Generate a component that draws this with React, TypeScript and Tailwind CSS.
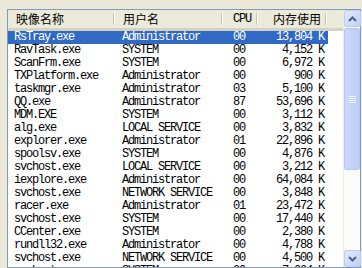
import React from 'react';

type Proc = { name: string; user: string; cpu: string; mem: string };

const procs: Proc[] = [
  { name: 'RsTray.exe', user: 'Administrator', cpu: '00', mem: '13,804 K' },
  { name: 'RavTask.exe', user: 'SYSTEM', cpu: '00', mem: '4,152 K' },
  { name: 'ScanFrm.exe', user: 'SYSTEM', cpu: '00', mem: '6,972 K' },
  { name: 'TXPlatform.exe', user: 'Administrator', cpu: '00', mem: '900 K' },
  { name: 'taskmgr.exe', user: 'Administrator', cpu: '03', mem: '5,100 K' },
  { name: 'QQ.exe', user: 'Administrator', cpu: '87', mem: '53,696 K' },
  { name: 'MDM.EXE', user: 'SYSTEM', cpu: '00', mem: '3,112 K' },
  { name: 'alg.exe', user: 'LOCAL SERVICE', cpu: '00', mem: '3,832 K' },
  { name: 'explorer.exe', user: 'Administrator', cpu: '01', mem: '22,896 K' },
  { name: 'spoolsv.exe', user: 'SYSTEM', cpu: '00', mem: '4,876 K' },
  { name: 'svchost.exe', user: 'LOCAL SERVICE', cpu: '00', mem: '3,212 K' },
  { name: 'iexplore.exe', user: 'Administrator', cpu: '00', mem: '64,084 K' },
  { name: 'svchost.exe', user: 'NETWORK SERVICE', cpu: '00', mem: '3,848 K' },
  { name: 'racer.exe', user: 'Administrator', cpu: '01', mem: '23,472 K' },
  { name: 'svchost.exe', user: 'SYSTEM', cpu: '00', mem: '17,440 K' },
  { name: 'CCenter.exe', user: 'SYSTEM', cpu: '00', mem: '2,380 K' },
  { name: 'rundll32.exe', user: 'Administrator', cpu: '00', mem: '4,788 K' },
  { name: 'svchost.exe', user: 'NETWORK SERVICE', cpu: '00', mem: '4,500 K' },
  { name: 'svchost.exe', user: 'SYSTEM', cpu: '00', mem: '7,004 K' },
];

const mono = "font-['Liberation_Mono',monospace] text-[12px] tracking-[-1.2px]";
const cjk = "font-['Noto_Sans_CJK_SC','Liberation_Sans',sans-serif] text-[12px]";

function HeaderCell({ label, w, className = '' }: { label: string; w: string; className?: string }) {
  return (
    <div className={`${w} flex items-center relative h-full ${className}`}>
      <span className="flex-1 truncate">{label}</span>
      <div className="absolute right-0 top-[3px] bottom-[3px] flex">
        <div className="w-px bg-[#c7c5b2]" />
        <div className="w-px bg-white" />
      </div>
    </div>
  );
}

function Chevron({ up }: { up: boolean }) {
  return (
    <svg width="9" height="6" viewBox="0 0 9 6">
      <path
        d={up ? 'M1 5 L4.5 1.5 L8 5' : 'M1 1 L4.5 4.5 L8 1'}
        fill="none"
        stroke="#4d6185"
        strokeWidth="2"
      />
    </svg>
  );
}

function ScrollButton({ up }: { up: boolean }) {
  return (
    <div className="h-[17px] w-[17px] rounded-[2px] border border-[#b9cdf7] bg-gradient-to-br from-[#e2ebfe] to-[#bcd0f9] flex items-center justify-center">
      <Chevron up={up} />
    </div>
  );
}

export default function App() {
  return (
    <div className="w-[362px] h-[268px] overflow-hidden bg-[#ece9d8] pt-[9px] pl-[7px] pr-[1px]">
      <div className="h-[259px] flex border border-[#7f9db9] bg-white">
        <div className="flex-1 flex flex-col overflow-hidden">
          <div className={`h-[21px] flex shrink-0 bg-[#ebeadb] border-b-[3px] border-[#d6d2c2] text-black ${cjk}`}>
            <HeaderCell label="映像名称" w="w-[107px]" className="pl-[8px]" />
            <HeaderCell label="用户名" w="w-[108px]" className="pl-[8px]" />
            <HeaderCell label="CPU" w="w-[35px]" className="pl-[10px] font-['Liberation_Mono',monospace] tracking-[-1.2px]" />
            <HeaderCell label="内存使用" w="w-[69px]" className="pl-[5px] text-right pr-[6px]" />
            <div className="flex-1" />
          </div>
          <div className={`flex-1 overflow-hidden ${mono}`}>
            {procs.map((p, i) => (
              <div
                key={i}
                className={`h-[13px] w-[320px] flex items-center leading-[13px] whitespace-pre ${
                  i === 0 ? 'bg-[#316ac5] text-white' : 'text-black'
                }`}
              >
                <div className="w-[107px] pl-[6px]">{p.name}</div>
                <div className="w-[108px] pl-[7px]">{p.user}</div>
                <div className="w-[35px] pl-[10px]">{p.cpu}</div>
                <div className="w-[70px] text-right pr-[4px]">{p.mem}</div>
              </div>
            ))}
          </div>
        </div>
        <div className="w-[17px] flex flex-col bg-[#fbfbf8] border-l border-[#eeede5]">
          <ScrollButton up />
          <div className="mt-px h-[142px] rounded-[2px] border border-[#b4c8f6] bg-gradient-to-r from-[#cddafc] to-[#bccef8] flex items-center justify-center">
            <div className="flex flex-col gap-px">
              <div className="w-[7px] h-px bg-[#eef3fe]" />
              <div className="w-[7px] h-px bg-[#eef3fe]" />
              <div className="w-[7px] h-px bg-[#eef3fe]" />
              <div className="w-[7px] h-px bg-[#eef3fe]" />
            </div>
          </div>
          <div className="flex-1" />
          <ScrollButton up={false} />
        </div>
      </div>
    </div>
  );
}
